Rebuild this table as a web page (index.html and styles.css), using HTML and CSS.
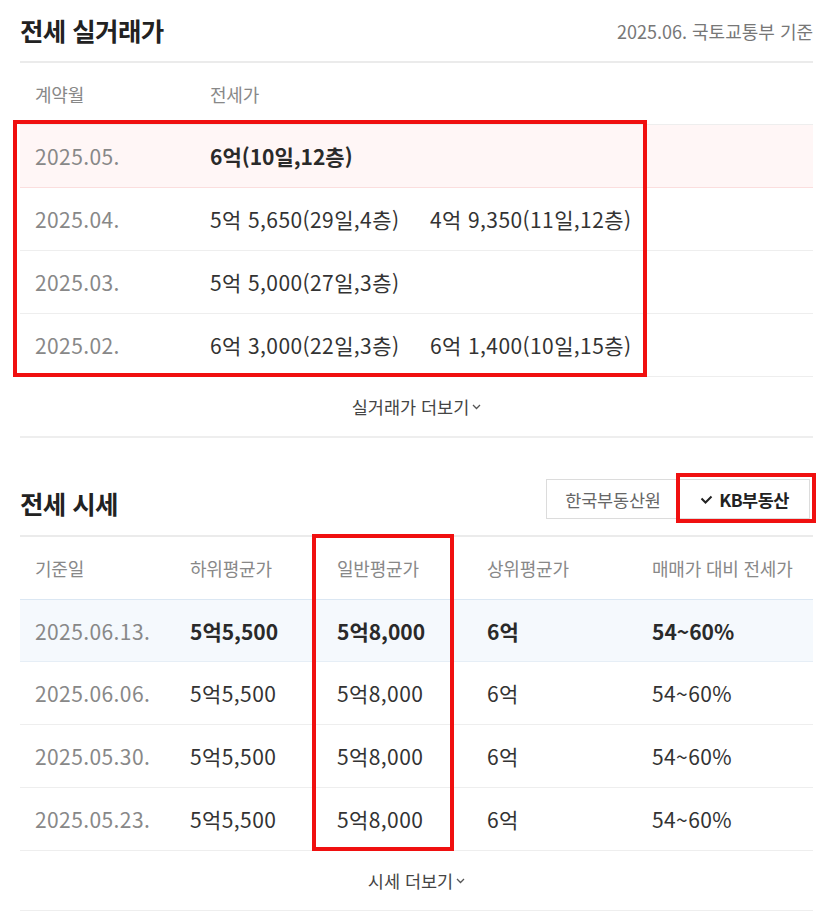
FILE: index.html
```html
<!DOCTYPE html>
<html lang="ko">
<head>
    <meta charset="UTF-8">
    <meta name="viewport" content="width=device-width, initial-scale=1.0">
    <title>전세 실거래가 / 전세 시세</title>
    <link rel="stylesheet" href="styles.css">
</head>
<body>
    <div class="page">
        <!-- 실거래가 -->
        <section class="block">
            <div class="block-head">
                <h2>전세 실거래가</h2>
                <span class="source">2025.06. 국토교통부 기준</span>
            </div>
            <div class="deal-table">
                <div class="row head">
                    <span>계약월</span>
                    <span>전세가</span>
                </div>
                <div class="marked">
                    <div class="row current">
                        <span class="date">2025.05.</span>
                        <span class="price">6억(10일,12층)</span>
                    </div>
                    <div class="row">
                        <span class="date">2025.04.</span>
                        <span class="price">5억 5,650(29일,4층)</span>
                        <span class="price">4억 9,350(11일,12층)</span>
                    </div>
                    <div class="row">
                        <span class="date">2025.03.</span>
                        <span class="price">5억 5,000(27일,3층)</span>
                    </div>
                    <div class="row">
                        <span class="date">2025.02.</span>
                        <span class="price">6억 3,000(22일,3층)</span>
                        <span class="price">6억 1,400(10일,15층)</span>
                    </div>
                    <div class="mark mark-deals"></div>
                </div>
            </div>
            <a class="more" href="#">실거래가 더보기<svg width="9" height="6" viewBox="0 0 9 6"><path d="M1 1l3.5 3.5L8 1" fill="none" stroke="#555" stroke-width="1.3"/></svg></a>
        </section>

        <!-- 시세 -->
        <section class="block">
            <div class="block-head price-head">
                <h2>전세 시세</h2>
                <div class="tabs">
                    <button class="tab">한국부동산원</button>
                    <button class="tab active"><svg width="13" height="9" viewBox="0 0 13 9"><path d="M1.5 3.5l4 4 6-6" fill="none" stroke="#222" stroke-width="2"/></svg>KB부동산</button>
                    <div class="mark mark-tab"></div>
                </div>
            </div>
            <div class="price-table">
                <div class="row head">
                    <span>기준일</span>
                    <span>하위평균가</span>
                    <span>일반평균가</span>
                    <span>상위평균가</span>
                    <span>매매가 대비 전세가</span>
                </div>
                <div class="row current">
                    <span class="date">2025.06.13.</span>
                    <span>5억5,500</span>
                    <span>5억8,000</span>
                    <span>6억</span>
                    <span>54~60%</span>
                </div>
                <div class="row">
                    <span class="date">2025.06.06.</span>
                    <span>5억5,500</span>
                    <span>5억8,000</span>
                    <span>6억</span>
                    <span>54~60%</span>
                </div>
                <div class="row">
                    <span class="date">2025.05.30.</span>
                    <span>5억5,500</span>
                    <span>5억8,000</span>
                    <span>6억</span>
                    <span>54~60%</span>
                </div>
                <div class="row">
                    <span class="date">2025.05.23.</span>
                    <span>5억5,500</span>
                    <span>5억8,000</span>
                    <span>6억</span>
                    <span>54~60%</span>
                </div>
                <div class="mark mark-col"></div>
            </div>
            <a class="more" href="#">시세 더보기<svg width="9" height="6" viewBox="0 0 9 6"><path d="M1 1l3.5 3.5L8 1" fill="none" stroke="#555" stroke-width="1.3"/></svg></a>
        </section>
    </div>
</body>
</html>
```

FILE: styles.css
```css
body {
    margin: 0;
    background: #fff;
    font-family: "Noto Sans CJK KR", "Noto Sans", sans-serif;
    color: #333;
}

.page {
    width: 793px;
    margin-left: 20px;
}

.block-head {
    display: flex;
    justify-content: space-between;
    align-items: center;
    height: 63px;
    border-bottom: 2px solid #ebebeb;
    box-sizing: border-box;
}

.block-head h2 {
    margin: 0;
    font-size: 25.5px;
    font-weight: 700;
    color: #222;
    letter-spacing: -0.6px;
    position: relative;
    top: -1px;
}

.block-head .source {
    font-size: 18px;
    color: #777;
    letter-spacing: 0;
}

.row {
    display: grid;
    align-items: center;
    height: 63px;
    padding-left: 15px;
    border-bottom: 1px solid #eee;
    box-sizing: border-box;
    font-size: 21px;
    letter-spacing: 0.4px;
}

.row.head {
    color: #888;
    font-size: 18px;
    letter-spacing: -0.2px;
    height: 62px;
}

.row .date { color: #888; }

.deal-table .row {
    grid-template-columns: 175px 220px 1fr;
}

.deal-table .row.current {
    background: #fff6f6;
    border-bottom-color: #fbdede;
}

.row.current { font-weight: 700; color: #2a2a2a; letter-spacing: 0; }
.row.current .date { font-weight: 400; color: #888; letter-spacing: 0.4px; }

.marked,
.price-table,
.tabs {
    position: relative;
}

/* red annotation boxes */
.mark {
    position: absolute;
    border: 4px solid #f01010;
    pointer-events: none;
}

.mark-deals { left: -7px; top: -5px; width: 626px; height: 249px; }
.mark-col   { left: 292px; top: -3px; width: 134px; height: 309px; }
.mark-tab   { left: 130px; top: -6px; width: 132px; height: 42px; }

.more {
    display: flex;
    justify-content: center;
    align-items: center;
    gap: 3px;
    height: 61px;
    border-bottom: 2px solid #eee;
    box-sizing: border-box;
    font-size: 17.5px;
    color: #444;
    text-decoration: none;
    letter-spacing: 0;
}

.block + .block {
    margin-top: 37px;
}

.price-head {
    height: 62px;
}

.price-head h2 {
    top: -3px;
}

.tabs {
    display: flex;
    align-self: flex-start;
    margin-top: 4px;
    margin-right: 3px;
}

.tab {
    height: 40px;
    padding: 0 8px;
    border: 1px solid #dcdcdc;
    background: #fff;
    font-family: inherit;
    font-size: 17.5px;
    color: #666;
    letter-spacing: -0.2px;
    cursor: pointer;
}

.tab.active {
    width: 130px;
    border-left: none;
    display: flex;
    align-items: center;
    justify-content: center;
    gap: 6px;
    color: #222;
    font-weight: 700;
    letter-spacing: -0.5px;
}

.tab:first-child { width: 134px; }

.price-table .row {
    grid-template-columns: 155px 147px 150px 165px 1fr;
}

.price-table .row.current {
    background: #f5f9fd;
    border-top: 1px solid #dbe7f3;
    border-bottom-color: #e6eef6;
}

.price-table .row.head {
    border-bottom: none;
}
```
